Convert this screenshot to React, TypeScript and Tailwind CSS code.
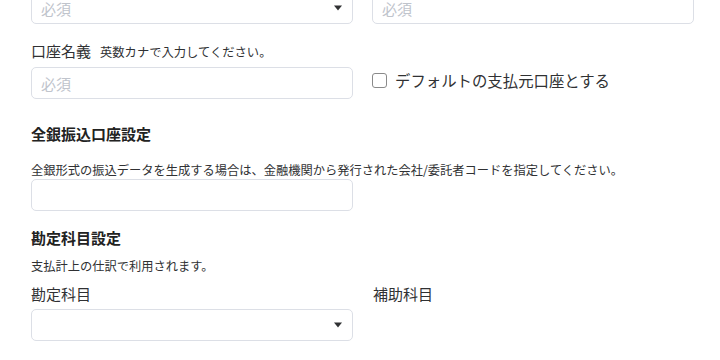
const font = { fontFamily: '"Noto Sans CJK JP", "Noto Sans", sans-serif' }

function Caret() {
  return (
    <svg width="10" height="6" viewBox="0 0 10 6" className="shrink-0">
      <path d="M1 0.5 L9 0.5 L5 5.5 Z" fill="#303133" />
    </svg>
  )
}

function TextInput({ placeholder }: { placeholder?: string }) {
  return (
    <div className="h-[32px] w-full rounded-[5px] border border-[#dcdfe6] bg-white px-[9px] flex items-center">
      <span className="text-[15px] text-[#c0c4cc] leading-none">{placeholder}</span>
    </div>
  )
}

function Select({ placeholder }: { placeholder?: string }) {
  return (
    <div className="h-[32px] w-full rounded-[5px] border border-[#dcdfe6] bg-white pl-[9px] pr-[9px] flex items-center justify-between">
      <span className="text-[15px] text-[#c0c4cc] leading-none">{placeholder}</span>
      <Caret />
    </div>
  )
}

export default function App() {
  return (
    <div className="w-[720px] h-[360px] overflow-hidden bg-white text-[#303133]" style={font}>
      <div className="pl-[31px] pr-[26px]">
        <div className="grid grid-cols-2 gap-x-[19px] mt-[-8px]">
          <Select placeholder="必須" />
          <TextInput placeholder="必須" />
        </div>

        <div className="grid grid-cols-2 gap-x-[19px] mt-[15px]">
          <div>
            <div className="flex items-baseline gap-[9px] h-[24px] leading-[24px]">
              <span className="text-[15px]">口座名義</span>
              <span className="text-[12.3px]">英数カナで入力してください。</span>
            </div>
            <div className="mt-[4px]">
              <TextInput placeholder="必須" />
            </div>
          </div>
          <div className="pt-[29px]">
            <label className="flex items-center gap-[8px] h-[24px]">
              <span className="w-[15px] h-[15px] rounded-[3px] border border-[#8a8a8a] bg-white" />
              <span className="text-[15.4px] leading-[24px]">デフォルトの支払元口座とする</span>
            </label>
          </div>
        </div>

        <h2 className="mt-[23px] text-[15px] font-bold leading-[24px] text-[#222]">全銀振込口座設定</h2>
        <p className="mt-[15px] text-[12.25px] leading-[18px]">
          全銀形式の振込データを生成する場合は、金融機関から発行された会社/委託者コードを指定してください。
        </p>
        <div className="grid grid-cols-2 gap-x-[19px]">
          <TextInput />
        </div>

        <h2 className="mt-[15px] text-[15px] font-bold leading-[24px] text-[#222]">勘定科目設定</h2>
        <p className="mt-[7px] text-[12.25px] leading-[18px]">支払計上の仕訳で利用されます。</p>

        <div className="grid grid-cols-2 gap-x-[19px] mt-[7px]">
          <div>
            <div className="text-[15px] leading-[24px]">勘定科目</div>
            <div className="mt-[3px]">
              <Select />
            </div>
          </div>
          <div>
            <div className="text-[15px] leading-[24px] pl-[1px]">補助科目</div>
          </div>
        </div>
      </div>
    </div>
  )
}
